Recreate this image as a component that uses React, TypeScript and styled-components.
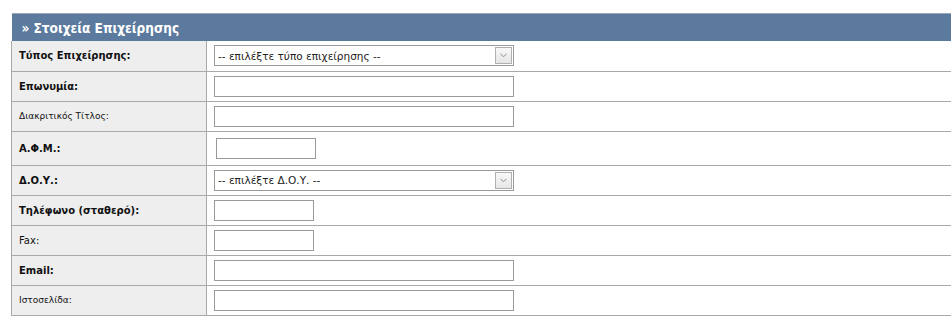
import React from 'react';
import styled, { createGlobalStyle } from 'styled-components';

const GlobalStyle = createGlobalStyle`
  html, body {
    margin: 0;
    padding: 0;
    background: #ffffff;
    overflow: hidden;
  }
  body {
    font-family: "DejaVu Sans", Verdana, sans-serif;
  }
`;

const Page = styled.div`
  padding: 13px 0 0 11px;
  width: 960px;
`;

const FormTable = styled.table`
  width: 950px;
  border-collapse: collapse;
  border-spacing: 0;
`;

const HeaderCell = styled.th`
  height: 27px;
  padding: 0 0 0 10px;
  background: #5b7a9e;
  border-top: 1px solid #9aa6b4;
  color: #ffffff;
  font-family: "DejaVu Sans Condensed", "DejaVu Sans", sans-serif;
  font-size: 13.5px;
  font-weight: bold;
  text-align: left;
  vertical-align: middle;
`;

const LabelCell = styled.td<{ weight: 'bold' | 'normal'; small?: boolean; tall?: boolean }>`
  box-sizing: border-box;
  width: 195px;
  height: ${({ tall }) => (tall ? 34 : 30)}px;
  padding: 0 0 0 7px;
  background: #eeeeee;
  border: 1px solid #a9a9a9;
  border-top: 0;
  color: #111111;
  font-size: ${({ small }) => (small ? '9px' : '10px')};
  font-weight: ${({ weight }) => weight};
  vertical-align: middle;
  white-space: nowrap;
`;

const ValueCell = styled.td`
  padding: 0 0 0 7px;
  background: #ffffff;
  border-bottom: 1px solid #a9a9a9;
  vertical-align: middle;
`;

const TextInput = styled.input<{ size_: 'wide' | 'short'; shift?: boolean }>`
  display: block;
  box-sizing: border-box;
  width: ${({ size_ }) => (size_ === 'wide' ? 300 : 100)}px;
  height: 21px;
  margin: 0 0 0 ${({ shift }) => (shift ? 2 : 0)}px;
  padding: 0 3px;
  border: 1px solid #9a9a9a;
  background: #ffffff;
  font-family: "DejaVu Sans", Verdana, sans-serif;
  font-size: 11px;
  outline: none;
`;

const SelectBox = styled.div`
  display: flex;
  align-items: center;
  justify-content: space-between;
  box-sizing: border-box;
  width: 300px;
  height: 21px;
  padding: 0 1px 0 3px;
  border: 1px solid #9a9a9a;
  background: #ffffff;
  color: #222222;
  font-family: "DejaVu Sans", Verdana, sans-serif;
  font-size: 10.5px;
`;

const SelectText = styled.span`
  white-space: nowrap;
`;

const ArrowButton = styled.span`
  display: flex;
  align-items: center;
  justify-content: center;
  box-sizing: border-box;
  width: 17px;
  height: 17px;
  border: 1px solid #b0b0b0;
  background: linear-gradient(#f8f8f8, #e6e6e6);
`;

const Chevron = () => (
  <svg width="7" height="5" viewBox="0 0 7 5">
    <path d="M0.5 0.8 L3.5 3.8 L6.5 0.8" fill="none" stroke="#8a8a8a" strokeWidth="1" />
  </svg>
);

type Field =
  | { label: string; weight: 'bold' | 'normal'; small?: boolean; kind: 'select'; placeholder: string }
  | { label: string; weight: 'bold' | 'normal'; small?: boolean; kind: 'input'; size: 'wide' | 'short'; shift?: boolean };

const fields: Field[] = [
  { label: 'Τύπος Επιχείρησης:', weight: 'bold', kind: 'select', placeholder: '-- επιλέξτε τύπο επιχείρησης --' },
  { label: 'Επωνυμία:', weight: 'bold', kind: 'input', size: 'wide' },
  { label: 'Διακριτικός Τίτλος:', weight: 'normal', small: true, kind: 'input', size: 'wide' },
  { label: 'Α.Φ.Μ.:', weight: 'bold', kind: 'input', size: 'short', shift: true },
  { label: 'Δ.Ο.Υ.:', weight: 'bold', kind: 'select', placeholder: '-- επιλέξτε Δ.Ο.Υ. --' },
  { label: 'Τηλέφωνο (σταθερό):', weight: 'bold', kind: 'input', size: 'short' },
  { label: 'Fax:', weight: 'normal', kind: 'input', size: 'short' },
  { label: 'Email:', weight: 'bold', kind: 'input', size: 'wide' },
  { label: 'Ιστοσελίδα:', weight: 'normal', small: true, kind: 'input', size: 'wide' },
];

export default function App() {
  return (
    <Page>
      <GlobalStyle />
      <FormTable>
        <tbody>
          <tr>
            <HeaderCell colSpan={2}>» Στοιχεία Επιχείρησης</HeaderCell>
          </tr>
          {fields.map((f) => (
            <tr key={f.label}>
              <LabelCell weight={f.weight} small={f.small} tall={f.kind === 'input' && f.shift}>
                {f.label}
              </LabelCell>
              <ValueCell>
                {f.kind === 'select' ? (
                  <SelectBox>
                    <SelectText>{f.placeholder}</SelectText>
                    <ArrowButton>
                      <Chevron />
                    </ArrowButton>
                  </SelectBox>
                ) : (
                  <TextInput type="text" size_={f.size} shift={f.shift} />
                )}
              </ValueCell>
            </tr>
          ))}
        </tbody>
      </FormTable>
    </Page>
  );
}
